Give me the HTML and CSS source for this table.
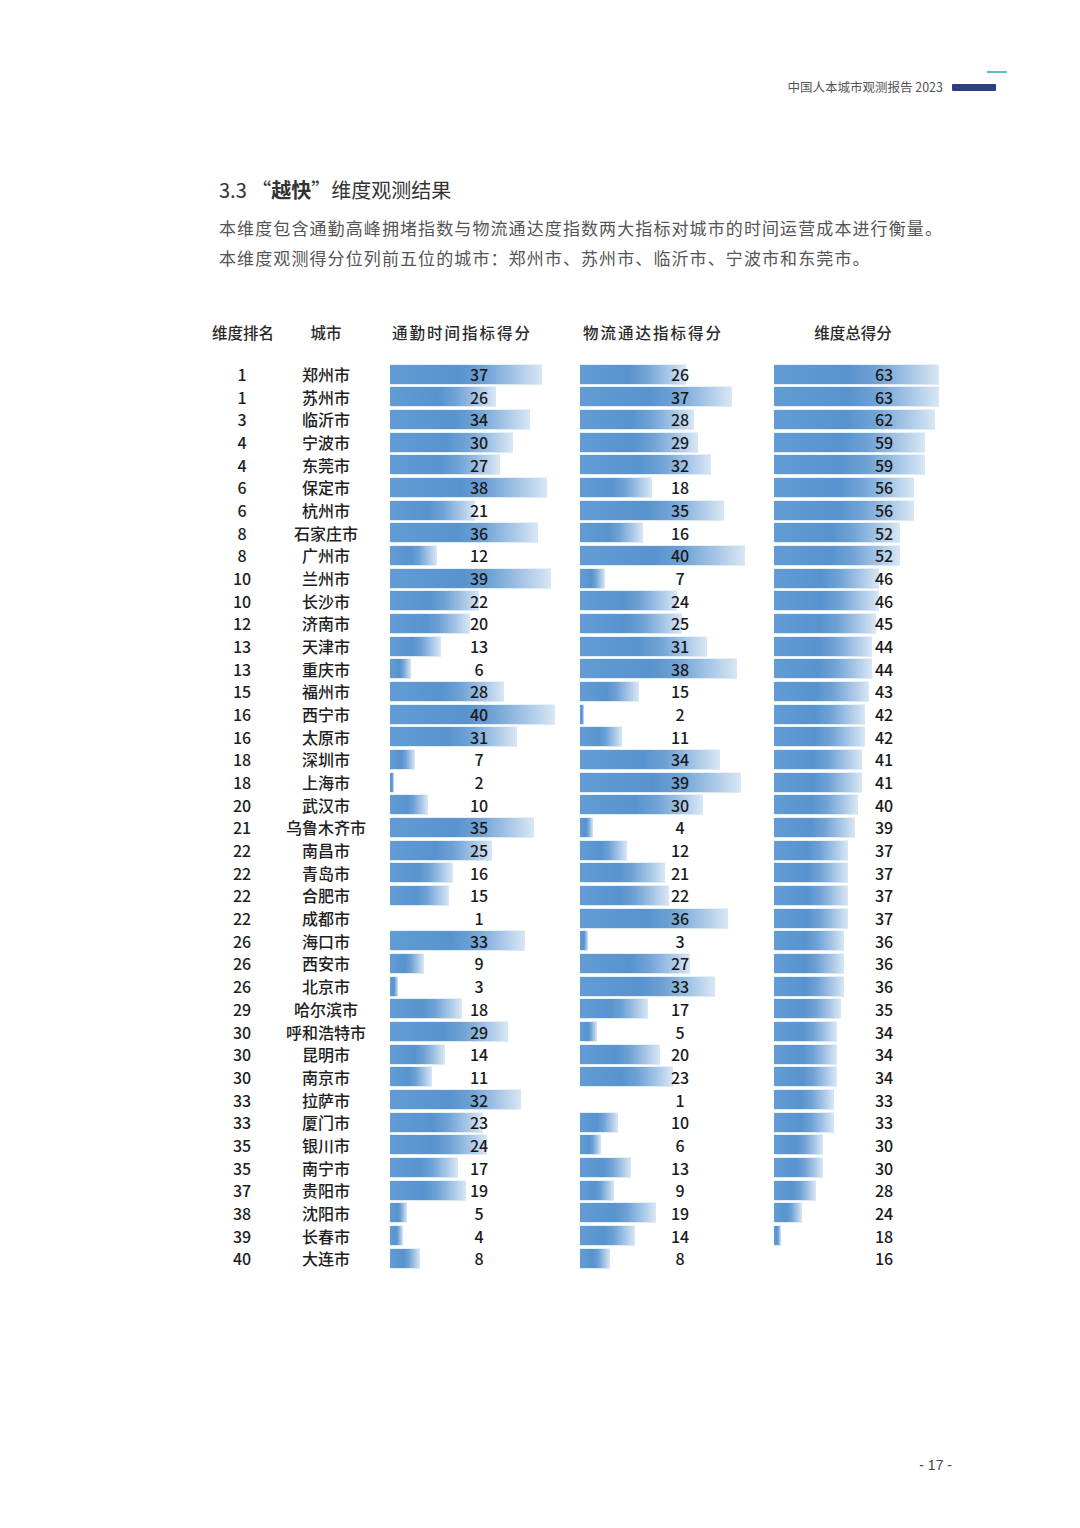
FILE: index.html
```html
<!DOCTYPE html>
<html lang="zh-CN">
<head>
<meta charset="utf-8">
<title>中国人本城市观测报告 2023</title>
<link rel="stylesheet" href="styles.css">
</head>
<body>
<div class="page">
  <header class="top">
    <span class="top-title">中国人本城市观测报告 2023</span>
    <div class="mark"><i class="mark-teal"></i><i class="mark-navy"></i></div>
  </header>

  <section class="intro">
    <h2 class="title">3.3 “<strong>越快</strong>”维度观测结果</h2>
    <p class="desc">本维度包含通勤高峰拥堵指数与物流通达度指数两大指标对城市的时间运营成本进行衡量。<br>本维度观测得分位列前五位的城市：郑州市、苏州市、临沂市、宁波市和东莞市。</p>
  </section>

  <div class="table">
    <div class="th th-rank">维度排名</div>
    <div class="th th-city">城市</div>
    <div class="th-spacer"></div>
    <div class="th th-c1">通勤时间指标得分</div>
    <div class="th th-c2">物流通达指标得分</div>
    <div class="th th-c3">维度总得分</div>
  </div>

  <div class="rows">
    <div class="row"><span class="rank">1</span><span class="city">郑州市</span><span></span><div class="cell c1"><i class="bar" style="width:152px"></i><b class="num">37</b></div><div class="cell c2"><i class="bar" style="width:106px"></i><b class="num">26</b></div><div class="cell c3"><i class="bar" style="width:165px"></i><b class="num">63</b></div></div>
    <div class="row"><span class="rank">1</span><span class="city">苏州市</span><span></span><div class="cell c1"><i class="bar" style="width:106px"></i><b class="num">26</b></div><div class="cell c2"><i class="bar" style="width:152px"></i><b class="num">37</b></div><div class="cell c3"><i class="bar" style="width:165px"></i><b class="num">63</b></div></div>
    <div class="row"><span class="rank">3</span><span class="city">临沂市</span><span></span><div class="cell c1"><i class="bar" style="width:140px"></i><b class="num">34</b></div><div class="cell c2"><i class="bar" style="width:114px"></i><b class="num">28</b></div><div class="cell c3"><i class="bar" style="width:161px"></i><b class="num">62</b></div></div>
    <div class="row"><span class="rank">4</span><span class="city">宁波市</span><span></span><div class="cell c1"><i class="bar" style="width:123px"></i><b class="num">30</b></div><div class="cell c2"><i class="bar" style="width:118px"></i><b class="num">29</b></div><div class="cell c3"><i class="bar" style="width:151px"></i><b class="num">59</b></div></div>
    <div class="row"><span class="rank">4</span><span class="city">东莞市</span><span></span><div class="cell c1"><i class="bar" style="width:110px"></i><b class="num">27</b></div><div class="cell c2"><i class="bar" style="width:131px"></i><b class="num">32</b></div><div class="cell c3"><i class="bar" style="width:151px"></i><b class="num">59</b></div></div>
    <div class="row"><span class="rank">6</span><span class="city">保定市</span><span></span><div class="cell c1"><i class="bar" style="width:157px"></i><b class="num">38</b></div><div class="cell c2"><i class="bar" style="width:72px"></i><b class="num">18</b></div><div class="cell c3"><i class="bar" style="width:140px"></i><b class="num">56</b></div></div>
    <div class="row"><span class="rank">6</span><span class="city">杭州市</span><span></span><div class="cell c1"><i class="bar" style="width:85px"></i><b class="num">21</b></div><div class="cell c2"><i class="bar" style="width:144px"></i><b class="num">35</b></div><div class="cell c3"><i class="bar" style="width:140px"></i><b class="num">56</b></div></div>
    <div class="row"><span class="rank">8</span><span class="city">石家庄市</span><span></span><div class="cell c1"><i class="bar" style="width:148px"></i><b class="num">36</b></div><div class="cell c2"><i class="bar" style="width:63px"></i><b class="num">16</b></div><div class="cell c3"><i class="bar" style="width:126px"></i><b class="num">52</b></div></div>
    <div class="row"><span class="rank">8</span><span class="city">广州市</span><span></span><div class="cell c1"><i class="bar" style="width:47px"></i><b class="num">12</b></div><div class="cell c2"><i class="bar" style="width:165px"></i><b class="num">40</b></div><div class="cell c3"><i class="bar" style="width:126px"></i><b class="num">52</b></div></div>
    <div class="row"><span class="rank">10</span><span class="city">兰州市</span><span></span><div class="cell c1"><i class="bar" style="width:161px"></i><b class="num">39</b></div><div class="cell c2"><i class="bar" style="width:25px"></i><b class="num">7</b></div><div class="cell c3"><i class="bar" style="width:105px"></i><b class="num">46</b></div></div>
    <div class="row"><span class="rank">10</span><span class="city">长沙市</span><span></span><div class="cell c1"><i class="bar" style="width:89px"></i><b class="num">22</b></div><div class="cell c2"><i class="bar" style="width:97px"></i><b class="num">24</b></div><div class="cell c3"><i class="bar" style="width:105px"></i><b class="num">46</b></div></div>
    <div class="row"><span class="rank">12</span><span class="city">济南市</span><span></span><div class="cell c1"><i class="bar" style="width:80px"></i><b class="num">20</b></div><div class="cell c2"><i class="bar" style="width:102px"></i><b class="num">25</b></div><div class="cell c3"><i class="bar" style="width:102px"></i><b class="num">45</b></div></div>
    <div class="row"><span class="rank">13</span><span class="city">天津市</span><span></span><div class="cell c1"><i class="bar" style="width:51px"></i><b class="num">13</b></div><div class="cell c2"><i class="bar" style="width:127px"></i><b class="num">31</b></div><div class="cell c3"><i class="bar" style="width:98px"></i><b class="num">44</b></div></div>
    <div class="row"><span class="rank">13</span><span class="city">重庆市</span><span></span><div class="cell c1"><i class="bar" style="width:21px"></i><b class="num">6</b></div><div class="cell c2"><i class="bar" style="width:157px"></i><b class="num">38</b></div><div class="cell c3"><i class="bar" style="width:98px"></i><b class="num">44</b></div></div>
    <div class="row"><span class="rank">15</span><span class="city">福州市</span><span></span><div class="cell c1"><i class="bar" style="width:114px"></i><b class="num">28</b></div><div class="cell c2"><i class="bar" style="width:59px"></i><b class="num">15</b></div><div class="cell c3"><i class="bar" style="width:95px"></i><b class="num">43</b></div></div>
    <div class="row"><span class="rank">16</span><span class="city">西宁市</span><span></span><div class="cell c1"><i class="bar" style="width:165px"></i><b class="num">40</b></div><div class="cell c2"><i class="bar" style="width:4px"></i><b class="num">2</b></div><div class="cell c3"><i class="bar" style="width:91px"></i><b class="num">42</b></div></div>
    <div class="row"><span class="rank">16</span><span class="city">太原市</span><span></span><div class="cell c1"><i class="bar" style="width:127px"></i><b class="num">31</b></div><div class="cell c2"><i class="bar" style="width:42px"></i><b class="num">11</b></div><div class="cell c3"><i class="bar" style="width:91px"></i><b class="num">42</b></div></div>
    <div class="row"><span class="rank">18</span><span class="city">深圳市</span><span></span><div class="cell c1"><i class="bar" style="width:25px"></i><b class="num">7</b></div><div class="cell c2"><i class="bar" style="width:140px"></i><b class="num">34</b></div><div class="cell c3"><i class="bar" style="width:88px"></i><b class="num">41</b></div></div>
    <div class="row"><span class="rank">18</span><span class="city">上海市</span><span></span><div class="cell c1"><i class="bar" style="width:4px"></i><b class="num">2</b></div><div class="cell c2"><i class="bar" style="width:161px"></i><b class="num">39</b></div><div class="cell c3"><i class="bar" style="width:88px"></i><b class="num">41</b></div></div>
    <div class="row"><span class="rank">20</span><span class="city">武汉市</span><span></span><div class="cell c1"><i class="bar" style="width:38px"></i><b class="num">10</b></div><div class="cell c2"><i class="bar" style="width:123px"></i><b class="num">30</b></div><div class="cell c3"><i class="bar" style="width:84px"></i><b class="num">40</b></div></div>
    <div class="row"><span class="rank">21</span><span class="city">乌鲁木齐市</span><span></span><div class="cell c1"><i class="bar" style="width:144px"></i><b class="num">35</b></div><div class="cell c2"><i class="bar" style="width:13px"></i><b class="num">4</b></div><div class="cell c3"><i class="bar" style="width:81px"></i><b class="num">39</b></div></div>
    <div class="row"><span class="rank">22</span><span class="city">南昌市</span><span></span><div class="cell c1"><i class="bar" style="width:102px"></i><b class="num">25</b></div><div class="cell c2"><i class="bar" style="width:47px"></i><b class="num">12</b></div><div class="cell c3"><i class="bar" style="width:74px"></i><b class="num">37</b></div></div>
    <div class="row"><span class="rank">22</span><span class="city">青岛市</span><span></span><div class="cell c1"><i class="bar" style="width:63px"></i><b class="num">16</b></div><div class="cell c2"><i class="bar" style="width:85px"></i><b class="num">21</b></div><div class="cell c3"><i class="bar" style="width:74px"></i><b class="num">37</b></div></div>
    <div class="row"><span class="rank">22</span><span class="city">合肥市</span><span></span><div class="cell c1"><i class="bar" style="width:59px"></i><b class="num">15</b></div><div class="cell c2"><i class="bar" style="width:89px"></i><b class="num">22</b></div><div class="cell c3"><i class="bar" style="width:74px"></i><b class="num">37</b></div></div>
    <div class="row"><span class="rank">22</span><span class="city">成都市</span><span></span><div class="cell c1"><i class="bar" style="width:0px"></i><b class="num">1</b></div><div class="cell c2"><i class="bar" style="width:148px"></i><b class="num">36</b></div><div class="cell c3"><i class="bar" style="width:74px"></i><b class="num">37</b></div></div>
    <div class="row"><span class="rank">26</span><span class="city">海口市</span><span></span><div class="cell c1"><i class="bar" style="width:135px"></i><b class="num">33</b></div><div class="cell c2"><i class="bar" style="width:8px"></i><b class="num">3</b></div><div class="cell c3"><i class="bar" style="width:70px"></i><b class="num">36</b></div></div>
    <div class="row"><span class="rank">26</span><span class="city">西安市</span><span></span><div class="cell c1"><i class="bar" style="width:34px"></i><b class="num">9</b></div><div class="cell c2"><i class="bar" style="width:110px"></i><b class="num">27</b></div><div class="cell c3"><i class="bar" style="width:70px"></i><b class="num">36</b></div></div>
    <div class="row"><span class="rank">26</span><span class="city">北京市</span><span></span><div class="cell c1"><i class="bar" style="width:8px"></i><b class="num">3</b></div><div class="cell c2"><i class="bar" style="width:135px"></i><b class="num">33</b></div><div class="cell c3"><i class="bar" style="width:70px"></i><b class="num">36</b></div></div>
    <div class="row"><span class="rank">29</span><span class="city">哈尔滨市</span><span></span><div class="cell c1"><i class="bar" style="width:72px"></i><b class="num">18</b></div><div class="cell c2"><i class="bar" style="width:68px"></i><b class="num">17</b></div><div class="cell c3"><i class="bar" style="width:67px"></i><b class="num">35</b></div></div>
    <div class="row"><span class="rank">30</span><span class="city">呼和浩特市</span><span></span><div class="cell c1"><i class="bar" style="width:118px"></i><b class="num">29</b></div><div class="cell c2"><i class="bar" style="width:17px"></i><b class="num">5</b></div><div class="cell c3"><i class="bar" style="width:63px"></i><b class="num">34</b></div></div>
    <div class="row"><span class="rank">30</span><span class="city">昆明市</span><span></span><div class="cell c1"><i class="bar" style="width:55px"></i><b class="num">14</b></div><div class="cell c2"><i class="bar" style="width:80px"></i><b class="num">20</b></div><div class="cell c3"><i class="bar" style="width:63px"></i><b class="num">34</b></div></div>
    <div class="row"><span class="rank">30</span><span class="city">南京市</span><span></span><div class="cell c1"><i class="bar" style="width:42px"></i><b class="num">11</b></div><div class="cell c2"><i class="bar" style="width:93px"></i><b class="num">23</b></div><div class="cell c3"><i class="bar" style="width:63px"></i><b class="num">34</b></div></div>
    <div class="row"><span class="rank">33</span><span class="city">拉萨市</span><span></span><div class="cell c1"><i class="bar" style="width:131px"></i><b class="num">32</b></div><div class="cell c2"><i class="bar" style="width:0px"></i><b class="num">1</b></div><div class="cell c3"><i class="bar" style="width:60px"></i><b class="num">33</b></div></div>
    <div class="row"><span class="rank">33</span><span class="city">厦门市</span><span></span><div class="cell c1"><i class="bar" style="width:93px"></i><b class="num">23</b></div><div class="cell c2"><i class="bar" style="width:38px"></i><b class="num">10</b></div><div class="cell c3"><i class="bar" style="width:60px"></i><b class="num">33</b></div></div>
    <div class="row"><span class="rank">35</span><span class="city">银川市</span><span></span><div class="cell c1"><i class="bar" style="width:97px"></i><b class="num">24</b></div><div class="cell c2"><i class="bar" style="width:21px"></i><b class="num">6</b></div><div class="cell c3"><i class="bar" style="width:49px"></i><b class="num">30</b></div></div>
    <div class="row"><span class="rank">35</span><span class="city">南宁市</span><span></span><div class="cell c1"><i class="bar" style="width:68px"></i><b class="num">17</b></div><div class="cell c2"><i class="bar" style="width:51px"></i><b class="num">13</b></div><div class="cell c3"><i class="bar" style="width:49px"></i><b class="num">30</b></div></div>
    <div class="row"><span class="rank">37</span><span class="city">贵阳市</span><span></span><div class="cell c1"><i class="bar" style="width:76px"></i><b class="num">19</b></div><div class="cell c2"><i class="bar" style="width:34px"></i><b class="num">9</b></div><div class="cell c3"><i class="bar" style="width:42px"></i><b class="num">28</b></div></div>
    <div class="row"><span class="rank">38</span><span class="city">沈阳市</span><span></span><div class="cell c1"><i class="bar" style="width:17px"></i><b class="num">5</b></div><div class="cell c2"><i class="bar" style="width:76px"></i><b class="num">19</b></div><div class="cell c3"><i class="bar" style="width:28px"></i><b class="num">24</b></div></div>
    <div class="row"><span class="rank">39</span><span class="city">长春市</span><span></span><div class="cell c1"><i class="bar" style="width:13px"></i><b class="num">4</b></div><div class="cell c2"><i class="bar" style="width:55px"></i><b class="num">14</b></div><div class="cell c3"><i class="bar" style="width:7px"></i><b class="num">18</b></div></div>
    <div class="row"><span class="rank">40</span><span class="city">大连市</span><span></span><div class="cell c1"><i class="bar" style="width:30px"></i><b class="num">8</b></div><div class="cell c2"><i class="bar" style="width:30px"></i><b class="num">8</b></div><div class="cell c3"><i class="bar" style="width:0px"></i><b class="num">16</b></div></div>
  </div>

  <footer class="pageno">- 17 -</footer>
</div>
</body>
</html>
```

FILE: styles.css
```css
* { box-sizing: border-box; }
html, body { margin: 0; padding: 0; background: #ffffff; }
body {
  font-family: "Noto Sans CJK SC", "Noto Sans", "Liberation Sans", sans-serif;
  color: #222;
}
.page { width: 1080px; min-height: 1528px; }

/* top header */
.top {
  display: flex;
  justify-content: flex-end;
  align-items: flex-end;
  gap: 9px;
  padding: 71px 73px 0 0;
}
.top-title {
  font-size: 12.5px;
  line-height: 16px;
  color: #555;
  white-space: nowrap;
}
.mark {
  display: flex;
  flex-direction: column;
  align-items: flex-end;
  width: 55px;
}
.mark-teal {
  display: block;
  width: 20px;
  height: 2px;
  background: #5cc0c2;
  margin-bottom: 11px;
}
.mark-navy {
  display: block;
  align-self: flex-start;
  width: 44px;
  height: 7px;
  background: #2d3f82;
  border-radius: 1px;
  margin-bottom: 4px;
}

/* intro */
.intro { padding-left: 219px; }
.title {
  margin: 81px 0 0;
  font-size: 20px;
  line-height: 28px;
  font-weight: 400;
  color: #333;
}
.title strong { font-weight: 700; }
.desc {
  margin: 9px 0 0;
  font-size: 17px;
  line-height: 30px;
  letter-spacing: 1.1px;
  color: #555;
}

/* table */
.table, .row {
  display: grid;
  grid-template-columns: 60px 108px 10px 190px 194px 200px;
  padding-left: 212px;
}
.table {
  margin-top: 49px;
  align-items: center;
}
.th {
  font-size: 15.5px;
  line-height: 20px;
  font-weight: 500;
  color: #2a2a2a;
  white-space: nowrap;
}
.th-rank, .th-city { text-align: center; }
.th-c1 { width: 144px; text-align: center; letter-spacing: 2px; }
.th-c2 { width: 146px; text-align: center; letter-spacing: 2px; }
.th-c3 { width: 158px; text-align: center; }

.rows { margin-top: 20.7px; }
.row {
  height: 22.68px;
  align-items: center;
  font-size: 16px;
  line-height: 20px;
}
.rank, .city {
  text-align: center;
  white-space: nowrap;
  font-weight: 500;
  color: #1e1e1e;
}
.cell {
  display: grid;
  align-items: center;
  justify-items: start;
  height: 22.68px;
}
.bar {
  grid-area: 1 / 1;
  display: block;
  height: 19px;
  background: linear-gradient(to right, #619cd4 0%, #5893ce 45%, #6fa2d5 62%, #a5c5e6 82%, #d9e7f4 100%);
  box-shadow: 0 1px 0 #dcebf5, 0 -1px 0 #e6f1f8;
}
.num {
  grid-area: 1 / 1;
  font-weight: 500;
  text-align: center;
  color: #1a1a1a;
  position: relative;
}
.c1 .num { width: 178px; }
.c2 .num { width: 200px; }
.c3 .num { width: 220px; }

.pageno {
  margin-top: 185px;
  padding-right: 128px;
  text-align: right;
  font-family: "Liberation Sans", sans-serif;
  font-size: 14px;
  line-height: 20px;
  color: #444;
}
```
